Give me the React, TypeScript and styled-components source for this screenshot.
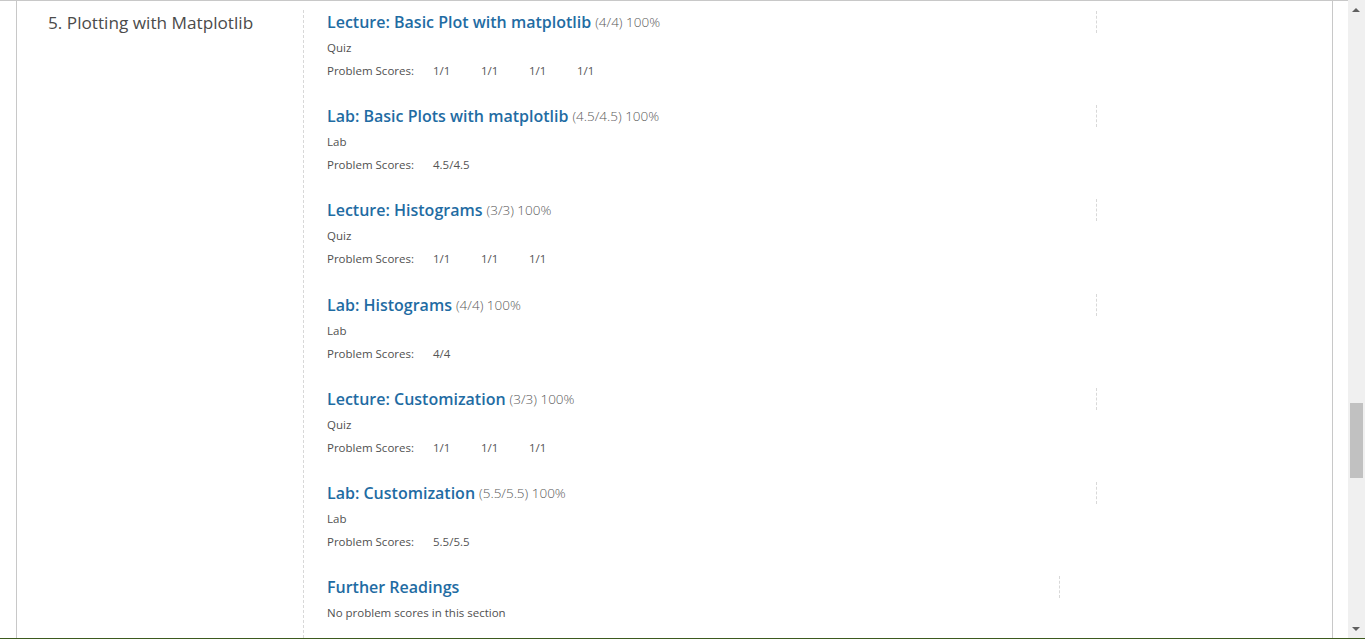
import * as React from "react";
import styled, { createGlobalStyle } from "styled-components";

const Global = createGlobalStyle`
  html, body {
    margin: 0;
    padding: 0;
    height: 639px;
    overflow: hidden;
    background: #fff;
  }
  #root {
    height: 639px;
  }
`;

const Frame = styled.div`
  display: flex;
  height: 639px;
  font-family: "Open Sans", "Liberation Sans", sans-serif;
  box-sizing: border-box;
  border-bottom: 1px solid #3d5a1e;
`;

const Viewport = styled.div`
  flex: 1;
  display: flex;
  border-top: 1px solid #c8c8c8;
  overflow: hidden;
`;

const Page = styled.div`
  margin-left: 16px;
  width: 1315px;
  border-left: 1px solid #c8c8c8;
  border-right: 1px solid #c8c8c8;
  display: flex;
`;

const ChapterName = styled.h2`
  margin: 0;
  width: 255px;
  padding: 10px 0 0 31px;
  font-size: 17.2px;
  font-weight: 400;
  line-height: 24px;
  color: #4b4b4b;
  flex-shrink: 0;
`;

const Sections = styled.div`
  flex: 1;
  margin-top: 9px;
  border-left: 1px dashed #d8d8d8;
  padding-left: 23px;
`;

const Section = styled.div`
  height: 94.2px;
  padding-top: 1px;
  box-sizing: border-box;
`;

const Header = styled.div<{ $width: number }>`
  width: ${(p) => p.$width}px;
  border-right: 1px dashed #d8d8d8;
  height: 22px;
  display: flex;
  align-items: center;
  white-space: nowrap;
`;

const Title = styled.a`
  font-size: 16px;
  font-weight: 600;
  color: #1f6ca3;
  text-decoration: none;
`;

const Score = styled.span`
  margin-left: 4px;
  font-size: 13.5px;
  font-weight: 300;
  color: #5a5a5a;
`;

const Kind = styled.div`
  margin-top: 7px;
  font-size: 11.5px;
  line-height: 16px;
  color: #505050;
`;

const ScoreRow = styled.div`
  margin-top: 7px;
  display: flex;
  font-size: 11.5px;
  line-height: 16px;
  color: #505050;
`;

const ScoreLabel = styled.span`
  width: 106px;
  flex-shrink: 0;
`;

const ScoreValue = styled.span`
  width: 48px;
  color: #555;
`;

const Scrollbar = styled.div`
  width: 17px;
  background: #f0f0f0;
  position: relative;
  flex-shrink: 0;
`;

const Arrow = styled.div<{ $down?: boolean }>`
  position: absolute;
  left: 4px;
  ${(p) => (p.$down ? "bottom: 7px;" : "top: 8px;")}
  width: 0;
  height: 0;
  border-left: 4px solid transparent;
  border-right: 4px solid transparent;
  ${(p) =>
    p.$down ? "border-top: 4px solid #606060;" : "border-bottom: 4px solid #606060;"}
`;

const Thumb = styled.div`
  position: absolute;
  left: 2px;
  top: 403px;
  width: 13px;
  height: 75px;
  background: #c1c1c1;
`;

type Item = {
  title: string;
  score?: string;
  kind?: string;
  scores?: string[];
  none?: boolean;
  width?: number;
};

const items: Item[] = [
  { title: "Lecture: Basic Plot with matplotlib", score: "(4/4) 100%", kind: "Quiz", scores: ["1/1", "1/1", "1/1", "1/1"] },
  { title: "Lab: Basic Plots with matplotlib", score: "(4.5/4.5) 100%", kind: "Lab", scores: ["4.5/4.5"] },
  { title: "Lecture: Histograms", score: "(3/3) 100%", kind: "Quiz", scores: ["1/1", "1/1", "1/1"] },
  { title: "Lab: Histograms", score: "(4/4) 100%", kind: "Lab", scores: ["4/4"] },
  { title: "Lecture: Customization", score: "(3/3) 100%", kind: "Quiz", scores: ["1/1", "1/1", "1/1"] },
  { title: "Lab: Customization", score: "(5.5/5.5) 100%", kind: "Lab", scores: ["5.5/5.5"] },
  { title: "Further Readings", none: true, width: 732 },
];

export default function App() {
  return (
    <>
      <Global />
      <Frame>
        <Viewport>
          <Page>
            <ChapterName>5. Plotting with Matplotlib</ChapterName>
            <Sections>
              {items.map((it) => (
                <Section key={it.title}>
                  <Header $width={it.width ?? 769}>
                    <Title href="#">{it.title}</Title>
                    {it.score && <Score>{it.score}</Score>}
                  </Header>
                  {it.none ? (
                    <Kind>No problem scores in this section</Kind>
                  ) : (
                    <>
                      <Kind>{it.kind}</Kind>
                      <ScoreRow>
                        <ScoreLabel>Problem Scores:</ScoreLabel>
                        {it.scores!.map((s, i) => (
                          <ScoreValue key={i}>{s}</ScoreValue>
                        ))}
                      </ScoreRow>
                    </>
                  )}
                </Section>
              ))}
            </Sections>
          </Page>
        </Viewport>
        <Scrollbar>
          <Arrow />
          <Thumb />
          <Arrow $down />
        </Scrollbar>
      </Frame>
    </>
  );
}
